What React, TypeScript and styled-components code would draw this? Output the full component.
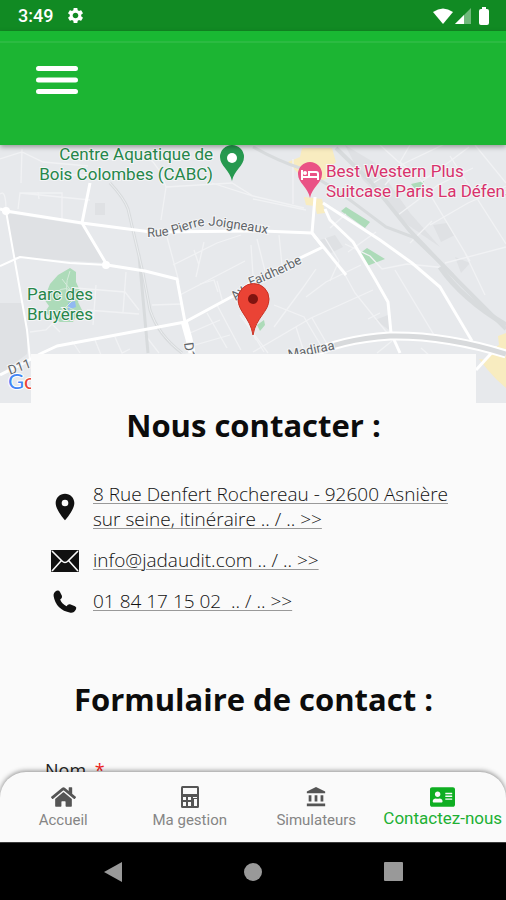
import React from "react";
import styled, { createGlobalStyle } from "styled-components";
import { MdAccountBalance, MdSettings, MdLocationOn } from "react-icons/md";
import { FaHome, FaAddressCard } from "react-icons/fa";

const GlobalStyle = createGlobalStyle`
  * { box-sizing: border-box; }
  body { margin: 0; background: #fafafa; font-family: "Open Sans", sans-serif; color: #111; }
`;

const Screen = styled.div`
  display: flex;
  flex-direction: column;
  height: 100vh;
  overflow: hidden;
  background: #fafafa;
`;

const StatusBar = styled.div`
  display: flex;
  align-items: center;
  justify-content: space-between;
  flex: none;
  height: 31px;
  padding: 0 16px 0 18px;
  background: #118a23;
  color: #fff;
  font: 500 18px/31px Roboto, sans-serif;
`;

const StatusGroup = styled.div<{ $gap: number }>`
  display: flex;
  align-items: center;
  gap: ${(p) => p.$gap}px;
  svg { display: block; }
`;

const Header = styled.header`
  position: relative;
  z-index: 1;
  flex: none;
  height: 114px;
  padding: 25px 29px;
  background: linear-gradient(#19b933 0 10px, #2bbb42 10px 12px, #1cb533 12px);
  box-shadow: 0 2px 5px rgba(0, 0, 0, 0.35);
`;

const MenuButton = styled.button`
  display: grid;
  place-items: center;
  width: 56px;
  height: 48px;
  padding: 0;
  border: 0;
  background: none;
  color: #fff;
  cursor: pointer;
`;

const Content = styled.main`
  flex: 1;
  min-height: 0;
  overflow: hidden;
`;

const MapArea = styled.section`
  height: 258px;
  background: #e7e9ec;
  svg { display: block; width: 100%; height: 100%; }
`;

const Card = styled.section`
  position: relative;
  margin: -49px 30px 0 31px;
  padding: 50px 14px 160px;
  background: #fafafa;
`;

const Title = styled.h2`
  margin: 0;
  text-align: center;
  font: 700 31px/42px "Open Sans", sans-serif;
  color: #0c0c0c;
`;

const ContactList = styled.ul`
  display: flex;
  flex-direction: column;
  gap: 16px;
  margin: 36px 0 64px;
  padding: 0 0 0 6px;
  list-style: none;
`;

const ContactRow = styled.li`
  display: grid;
  grid-template-columns: 28px 1fr;
  align-items: center;
  gap: 14px;
  svg { display: block; justify-self: center; color: #111; }
`;

const ContactLink = styled.a`
  font: 300 19px/25px "Open Sans", sans-serif;
  color: #111;
  text-decoration: underline;
  text-decoration-color: #999;
  text-decoration-thickness: 1px;
  text-underline-offset: 2px;
`;

const Form = styled.form`
  display: flex;
  flex-direction: column;
  gap: 8px;
  margin-top: 36px;
`;

const FieldLabel = styled.label`
  font: 400 18px/28px "Open Sans", sans-serif;
  color: #222;
`;

const Required = styled.span`
  margin-left: 4px;
  color: #f02020;
`;

const TextField = styled.input`
  height: 40px;
  border: 1px solid #bbb;
  font: 400 18px "Open Sans", sans-serif;
`;

const TabBar = styled.nav`
  position: relative;
  z-index: 1;
  display: grid;
  grid-template-columns: repeat(4, 1fr);
  flex: none;
  height: 70px;
  margin-top: -70px;
  border-radius: 26px 26px 0 0;
  background: #fafafa;
  box-shadow: 0 -1px 5px rgba(0, 0, 0, 0.45);
`;

const Tab = styled.a<{ $active?: boolean }>`
  display: flex;
  flex-direction: column;
  align-items: center;
  padding-top: 12px;
  color: ${(p) => (p.$active ? "#0fae22" : "#555")};
  text-decoration: none;
  white-space: nowrap;
  svg { display: block; height: 26px; }
`;

const TabLabel = styled.span<{ $active?: boolean }>`
  font: 400 ${(p) => (p.$active ? "17px/16px" : "15px/20px")} Roboto, sans-serif;
  color: ${(p) => (p.$active ? "#20b033" : "#858585")};
`;

const SystemBar = styled.div`
  display: flex;
  align-items: center;
  justify-content: center;
  gap: 100px;
  flex: none;
  height: 58px;
  background: #000;
  border-top: 1px solid #444;
`;

const SystemButton = styled.button`
  display: grid;
  place-items: center;
  width: 40px;
  height: 40px;
  padding: 0;
  border: 0;
  background: none;
  color: #999;
`;

const MapLabel = styled.text<{ $fill: string; $size?: number }>`
  font: 400 ${(p) => p.$size ?? 17}px Roboto, sans-serif;
  fill: ${(p) => p.$fill};
  stroke: #f4f5f6;
  stroke-width: 2px;
  paint-order: stroke;
`;

function CityMap() {
  return (
    <svg viewBox="0 0 506 258" preserveAspectRatio="xMidYMid slice" role="img" aria-label="Plan du quartier">
      <defs>
        <path id="joigneaux" d="M147 92 Q168 92 184 86 Q204 78 222 82 Q244 85 276 90" />
        <path id="faidherbe" d="M236 156 L250 142 Q274 133 302 118" />
      </defs>
      <rect width="506" height="258" fill="#e7e9ec" />
      <g fill="#dfe1e4">
        <path d="M7 68L82 80 106 118 14 112Z" />
        <path d="M0 158h22l5 27v24l-27 20z" />
        <path d="M95 58h10v12H95zM320 95l15-5 8 12-12 6zM433 80l14-2 8 12-14 7zM375 175l13-5 4 17z" />
        <path d="M345 0l30 18 35 50 30 34-32-22-45-45zM455 112l15 6-9 10z" />
      </g>
      <g fill="#f8ecc0">
        <path d="M288 17l12-5 2-9 30 0 4 14-10 9 10 4-16 6-6 8-18-18z" />
        <path d="M304 52l18 2 3 14-8 1-2-8-9-1z" />
        <path d="M506 188l-8 3 1 9-8 5-4 10-8-1 8 10 9 10 10 9z" />
      </g>
      <g fill="#addbb9">
        <path d="M70 123l6 4 0 10 5 11-3 9 6 12-9 4-2 4H60l-8-4-7-6 4-6-5-7 6-15 8-9z" />
        <path d="M346 62l24 15-5 6-24-17zM359 109l8-6 18 11-18 7z" />
        <path d="M411 39l13-3-1 5-8 3zM257 180l7-5 1 5-5 6z" />
      </g>
      <path d="M68 158l7-2 1 6-8 3z" fill="#91b9f2" />
      <g fill="none" stroke="#d5eadb" strokeWidth="1">
        <path d="M70 126Q62 146 72 157M55 148Q68 138 75 150M52 170l16-8 12 6M62 134l14 18-20 20" />
      </g>
      <g fill="none" stroke="#f1f2f4" strokeWidth="1.3">
        <path d="M0 14l22-7 21 10 45 4M22 4l-1 34M0 49q6-5 6 17M18 64l2-16h42v26M20 48l70 7M38 47l1 7" />
        <path d="M148 12q12 10 18 30l-5 33M166 42l66-4 21 13M212 38l41 13 51 12M167 92l12 45M173 120l44-22 24-8M194 105l5 15M196 132l8-35M180 150l65-34" />
        <path d="M96 140l-3 40M75 143l50 4 14 18M87 165l52 4M30 187l16-2 6-6 8 8M95 195l6 15M115 192l7 16 8-4M145 190l14 18M72 196l8 12" />
        <path d="M152 160l30-1M126 127l-3 40M200 139l14-4 4 12M217 136l6 22M207 168l20 35M217 160l24 45M190 188l30-13M195 200l35-10M236 155l20 40M240 170l28 38" />
        <path d="M264 207l-9-15-15-33M253 207l58-34 62-28M274 160l30 12 10 17 15 25M296 182l8 25M312 173l15 26M344 128l11 20 33 41M306 152l20-15 35-17M274 182l28-38 14-20M380 168l-12 6" />
        <path d="M293 14v45M253 54l53 11M325 93l14 23-9 20M345 99l25 12 12 13 25-5 40 4M395 125l42 70M330 83l16-14M348 107l28-20" />
        <path d="M380 0l22 20-17 20M410 0l-10 17 22 19 48 80M370 40l35-22 48-23M421 37l28-20 20-15M398 70l40-30 35-17M430 80l38-22 38-17M450 11l56 88M475 0l31 38M445 118l61-16M465 108l20 42M410 98l22-22" />
        <path d="M253 130l-2-30M265 126l-8-32M282 120l-3-30M377 208l15-12M421 203l9 8M70 30h50M225 0l-5 16" />
      </g>
      <g fill="none" stroke="#d8dbdd" strokeWidth="3">
        <path d="M110 38Q124 53 128 64L143 128 150 165Q158 190 182 208M139 110l9 98" />
        <path d="M253 2Q278 16 300 23L338 46 386 82 413 92 453 130" />
        <path d="M336 3L370 36 410 86 458 136 506 184" strokeWidth="4" />
        <path d="M440 122Q462 154 506 180" strokeWidth="5" />
      </g>
      <path d="M110 38Q124 53 128 64L143 128 150 165Q158 190 182 208" fill="none" stroke="#eceef0" />
      <g fill="none" stroke="#fff" strokeWidth="3" strokeLinejoin="round">
        <path d="M0 64L6 66 82 78 151 87 263 86 312 88 323 102M90 38L82 78 107 120 145 126 177 134 185 177" />
        <path d="M6 66L17 128 27 185 30 215M107 120L70 118 20 112 0 121" strokeWidth="2" />
        <path d="M0 230L20 220 42 208 57 201 100 193 185 177 233 151 253 136 298 114 323 102" />
        <path d="M315 52L312 88 325 104 346 130M325 64L330 75 353 97 375 134 388 157 391 188 400 208" />
        <path d="M323 58L380 95 412 118 440 142 472 196" />
        <path d="M184 176L189 194 192 208" strokeWidth="7" />
        <path d="M476 225L497 202" />
      </g>
      <g fill="none">
        <path d="M305 212Q340 194 390 191Q445 190 506 209" stroke="#fff" strokeWidth="9" />
        <path d="M305 212Q340 194 390 191Q445 190 506 209" stroke="#d8dadc" strokeWidth="5" />
      </g>
      <circle cx="6" cy="66" r="4" fill="#fff" />
      <circle cx="106" cy="120" r="4" fill="#fff" />

      <MapLabel $fill="#26864a" x="213" y="15" textAnchor="end">Centre Aquatique de</MapLabel>
      <MapLabel $fill="#26864a" x="213" y="35" textAnchor="end">Bois Colombes (CABC)</MapLabel>
      <MapLabel $fill="#d8326c" x="326" y="32">Best Western Plus</MapLabel>
      <MapLabel $fill="#d8326c" x="326" y="52">Suitcase Paris La Défense</MapLabel>
      <MapLabel $fill="#26864a" x="27" y="155">Parc des</MapLabel>
      <MapLabel $fill="#26864a" x="27" y="175">Bruyères</MapLabel>
      <MapLabel $fill="#606468" $size={13}><textPath href="#joigneaux">Rue Pierre Joigneaux</textPath></MapLabel>
      <MapLabel $fill="#606468" $size={13}><textPath href="#faidherbe">Av. Faidherbe</textPath></MapLabel>
      <MapLabel $fill="#606468" $size={13} transform="translate(289 214) rotate(-12)">Madiraa</MapLabel>
      <MapLabel $fill="#606468" $size={13} transform="translate(10 230) rotate(-20)">D11</MapLabel>
      <MapLabel $fill="#606468" $size={13} transform="translate(184 198) rotate(82)">D11</MapLabel>

      <g>
        <path d="M232 36C230 25 220 21 220 12a12 12 0 0 1 24 0C244 21 234 25 232 36Z" fill="#26994f" />
        <circle cx="232" cy="13" r="5" fill="#fff" />
        <path d="M310 53C308 42 298 38 298 29a12 12 0 0 1 24 0C322 38 312 42 310 53Z" fill="#ea5285" />
        <path d="M302 25v10M302 32h16v3M318 32v-3q0-2-2-2h-7v5" fill="none" stroke="#fff" strokeWidth="2" />
        <circle cx="305" cy="28" r="2" fill="#fff" />
      </g>
      <path d="M253 190C250 172 238 167 238 154a15 15 0 0 1 31 0C269 167 256 172 253 190Z" fill="#ea4335" stroke="#c93224" />
      <circle cx="253" cy="154" r="5" fill="#801410" />
      <text x="8" y="244" fontFamily="Lato, sans-serif" fontSize="22" stroke="#fff" strokeWidth="2" paintOrder="stroke">
        <tspan fill="#4285f4">G</tspan><tspan fill="#ea4335">o</tspan>
      </text>
    </svg>
  );
}

function EnvelopeIcon() {
  return (
    <svg width="28" height="22" viewBox="0 0 28 22" aria-hidden="true">
      <rect width="28" height="22" rx="1" fill="#111" />
      <path d="M1 1L11 11Q14 14 17 11L27 1M1 21L10 11M27 21L18 11" fill="none" stroke="#fafafa" strokeWidth="1.6" />
    </svg>
  );
}

function PhoneIcon() {
  return (
    <svg width="24" height="24" viewBox="0 0 24 24" aria-hidden="true">
      <path d="M3.500 .8Q6 0 7 2L9 6Q9.500 8.200 7.200 9.400Q8.500 13.500 13.500 16.200Q15 13.800 17 14.200L22 16.200Q24 17.200 23 19.200Q21 23.200 17.500 22.700Q3 20 .6 6Q.2 2.500 3.500 .8Z" fill="#111" />
    </svg>
  );
}

function CalculatorIcon() {
  return (
    <svg width="20" height="26" viewBox="0 0 20 26" aria-hidden="true">
      <rect x="1" y="2" width="18" height="22" rx="1.5" fill="#555" />
      <g fill="#fafafa">
        <path d="M3 4h14v6H3zM3 13h3v3H3zM8 13h3v3H8zM3 18h3v4H3zM8 18h3v4H8zM13 13h4v1h-4zM14 15h3v7h-3z" />
      </g>
    </svg>
  );
}

export default function App() {
  return (
    <>
      <GlobalStyle />
      <Screen>
        <StatusBar>
          <StatusGroup $gap={13}>
            <span>3:49</span>
            <MdSettings size={19} />
          </StatusGroup>
          <StatusGroup $gap={2}>
            <svg width="20" height="16" viewBox="0 0 20 16" aria-hidden="true">
              <path d="M0 4Q10-3 20 4L10 16Z" fill="#fff" />
            </svg>
            <svg width="16" height="16" viewBox="0 0 16 16" aria-hidden="true">
              <path d="M0 16L16 0V16Z" fill="#fff" opacity=".4" />
              <path d="M0 16L9 7V16Z" fill="#fff" />
            </svg>
            <svg width="17" height="18" viewBox="0 0 17 18" aria-hidden="true">
              <path d="M7 2h2V0h4v2h1q2 0 2 2v12q0 2-2 2H8q-2 0-2-2V4q0-2 2-2Z" fill="#fff" />
            </svg>
          </StatusGroup>
        </StatusBar>
        <Header>
          <MenuButton aria-label="Menu">
            <svg width="42" height="30" viewBox="0 0 42 30" aria-hidden="true">
              <path d="M2.500 3.500h37M2.500 15h37M2.500 26.500h37" stroke="#fff" strokeWidth="5" strokeLinecap="round" />
            </svg>
          </MenuButton>
        </Header>
        <Content>
          <MapArea><CityMap /></MapArea>
          <Card>
            <Title>Nous contacter :</Title>
            <ContactList>
              <ContactRow>
                <MdLocationOn size={32} />
                <ContactLink href="#itineraire">8 Rue Denfert Rochereau - 92600 Asnière sur seine, itinéraire .. / .. &gt;&gt;</ContactLink>
              </ContactRow>
              <ContactRow>
                <EnvelopeIcon />
                <ContactLink href="mailto:info@jadaudit.com">info@jadaudit.com .. / .. &gt;&gt;</ContactLink>
              </ContactRow>
              <ContactRow>
                <PhoneIcon />
                <ContactLink href="tel:0184171502">01 84 17 15 02&nbsp; .. / .. &gt;&gt;</ContactLink>
              </ContactRow>
            </ContactList>
            <Title>Formulaire de contact :</Title>
            <Form>
              <FieldLabel htmlFor="nom">Nom <Required>*</Required></FieldLabel>
              <TextField id="nom" name="nom" required />
            </Form>
          </Card>
        </Content>
        <TabBar>
          <Tab href="#accueil"><FaHome size={25} /><TabLabel>Accueil</TabLabel></Tab>
          <Tab href="#gestion"><CalculatorIcon /><TabLabel>Ma gestion</TabLabel></Tab>
          <Tab href="#simulateurs"><MdAccountBalance size={22} /><TabLabel>Simulateurs</TabLabel></Tab>
          <Tab href="#contact" $active aria-current="page"><FaAddressCard size={25} /><TabLabel $active>Contactez-nous</TabLabel></Tab>
        </TabBar>
        <SystemBar>
          <SystemButton aria-label="Retour">
            <svg width="20" height="20" viewBox="0 0 20 20" aria-hidden="true"><path d="M1 10L19 0V20Z" fill="currentColor" /></svg>
          </SystemButton>
          <SystemButton aria-label="Écran d'accueil">
            <svg width="18" height="18" viewBox="0 0 18 18" aria-hidden="true"><circle cx="9" cy="9" r="9" fill="currentColor" /></svg>
          </SystemButton>
          <SystemButton aria-label="Applications récentes">
            <svg width="19" height="19" viewBox="0 0 19 19" aria-hidden="true"><rect width="19" height="19" rx="1" fill="currentColor" /></svg>
          </SystemButton>
        </SystemBar>
      </Screen>
    </>
  );
}
